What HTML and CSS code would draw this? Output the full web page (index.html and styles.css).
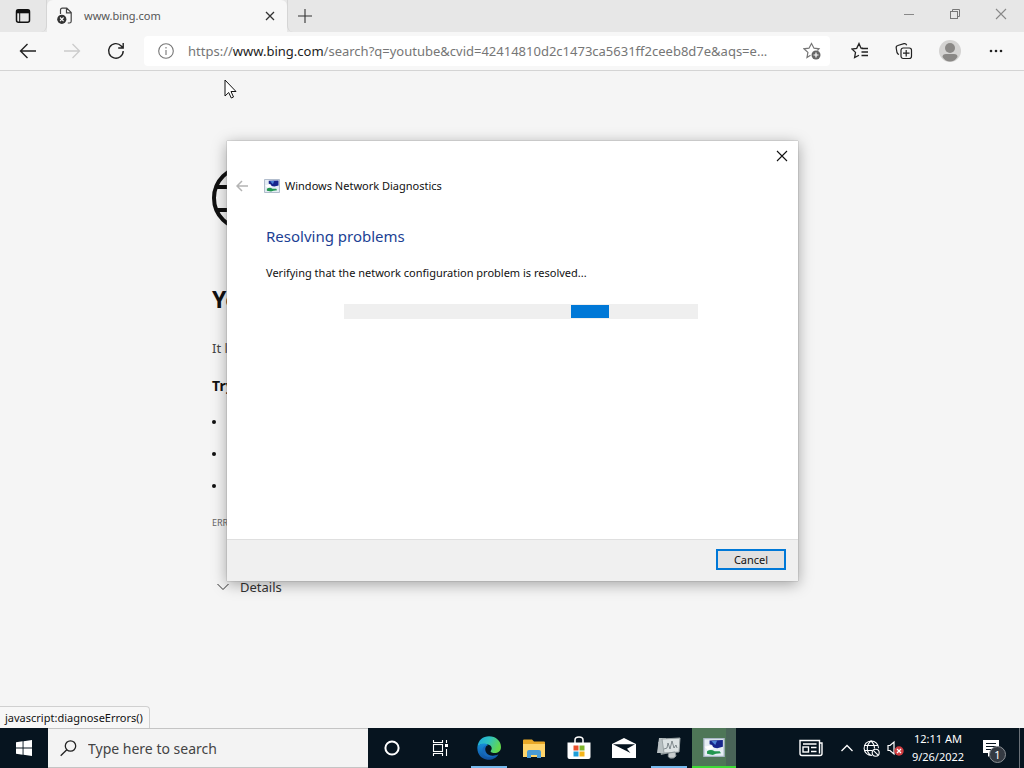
FILE: index.html
```html
<!DOCTYPE html>
<html lang="en">
<head>
<meta charset="utf-8">
<title>www.bing.com</title>
<link rel="stylesheet" href="styles.css">
</head>
<body>
<header class="browser">
  <div class="tabstrip">
    <button class="tab-actions" aria-label="Tab actions">
      <svg width="16" height="16" viewBox="0 0 16 16" fill="none" stroke="#111" stroke-width="1.5"><rect x="1.5" y="1.7" width="13" height="12.6" rx="2"/><path d="M1.5 3.5h13" stroke-width="3.6"/><path d="M4.7 5v9" stroke-width="1"/></svg>
    </button>
    <div class="tab">
      <svg width="16" height="18" viewBox="0 0 16 18" fill="none" stroke="#444" stroke-width="1.2"><path d="M3.5 7V3q0-1.8 1.8-1.8h4.5l4.4 4.4v8.6q0 1.8-1.8 1.8h-1.6M9.5 1.5v4.3h4.4"/><circle cx="4.8" cy="12.3" r="4.6" fill="#333" stroke="none"/><path d="M3 10.5l3.6 3.6M6.6 10.5L3 14.1" stroke="#fff" stroke-width="1.1"/></svg>
      <span class="tab-title">www.bing.com</span>
      <button class="tab-close" aria-label="Close tab">
        <svg width="10" height="10" viewBox="0 0 10 10" stroke="#333" stroke-width="1.3"><path d="M1 1l8 8M9 1L1 9"/></svg>
      </button>
    </div>
    <button class="new-tab" aria-label="New tab">
      <svg width="14" height="14" viewBox="0 0 14 14" stroke="#333" stroke-width="1.1"><path d="M7 0v14M0 7h14"/></svg>
    </button>
    <div class="window-buttons">
      <button aria-label="Minimize"><svg width="12" height="12" viewBox="0 0 12 12" stroke="#888"><path d="M1 6.5h10"/></svg></button>
      <button aria-label="Restore"><svg width="12" height="12" viewBox="0 0 12 12" fill="none" stroke="#777"><rect x="1.5" y="3.5" width="7" height="7"/><path d="M3.500 3.500v-2h7v7h-2"/></svg></button>
      <button aria-label="Close"><svg width="12" height="12" viewBox="0 0 12 12" stroke="#888" stroke-width="1.1"><path d="M1 1l10 10M11 1L1 11"/></svg></button>
    </div>
  </div>
  <div class="toolbar">
    <button class="tool" aria-label="Back"><svg width="18" height="16" viewBox="0 0 18 16" fill="none" stroke="#222" stroke-width="1.4"><path d="M17 8H1.500M8.500 1L1.500 8l7 7"/></svg></button>
    <button class="tool" aria-label="Forward" disabled><svg width="18" height="16" viewBox="0 0 18 16" fill="none" stroke="#ccc" stroke-width="1.3"><path d="M1 8h15.500M9.500 1l7 7-7 7"/></svg></button>
    <button class="tool" aria-label="Refresh"><svg width="18" height="18" viewBox="0 0 18 18" fill="none" stroke="#222" stroke-width="1.4"><path d="M16.200 9a7.300 7.300 0 1 1-2-5.100l2 2.100M16.200 1v5h-5"/></svg></button>
    <div class="address">
      <svg width="16" height="16" viewBox="0 0 16 16" fill="none" stroke="#767676" stroke-width="1.1"><circle cx="8" cy="8" r="7.300"/><path d="M8 7v5M8 4v1.500"/></svg>
      <span class="url">https://<b>www.bing.com</b>/search?q=youtube&amp;cvid=42414810d2c1473ca5631ff2ceeb8d7e&amp;aqs=e...</span>
      <button class="add-favorite" aria-label="Add this page to favorites"><svg width="18" height="18" viewBox="0 0 18 18" fill="none" stroke="#767676" stroke-width="1.200"><path d="M7.500 13.200L4 15.500l.9-5.100L1 6.800l5-.6L8.500 1.500 11 6.200l5 .6-1.500 1.700"/><circle cx="13" cy="13" r="4.500" fill="#666" stroke="none"/><path d="M13 10.500v5M10.500 13h5" stroke="#fff"/></svg></button>
    </div>
    <button class="tool" aria-label="Favorites"><svg width="18" height="18" viewBox="0 0 18 18" fill="none" stroke="#222" stroke-width="1.300"><path d="M12 6.200h-2L8 1.500 5.700 6.300 1 7l3.500 3.400-.9 5.200L8 13.200M10.500 6.500H17M10.500 10H17M10.500 13.500H17"/></svg></button>
    <button class="tool" aria-label="Collections"><svg width="18" height="18" viewBox="0 0 18 18" fill="none" stroke="#222" stroke-width="1.200"><path d="M4 12.500Q2.400 12 2 10.500L1.200 6q-.3-2 1.600-2.500L9 1.700q2-.4 2.700 1.500"/><rect x="6" y="6" width="10.500" height="10.500" rx="2.200"/><path d="M11.200 8v6.500M8 11.200h6.500"/></svg></button>
    <button class="tool" aria-label="Profile"><svg width="22" height="22" viewBox="0 0 22 22"><circle cx="11" cy="11" r="11" fill="#d4d3d2"/><circle cx="11" cy="8" r="5" fill="#8a8886"/><path d="M3.500 17q0-3 3.500-3h8q3.500 0 3.500 3-3 4.500-7.500 4.500T3.500 17" fill="#8a8886"/></svg></button>
    <button class="tool" aria-label="Settings and more"><svg width="14" height="4" viewBox="0 0 14 4" fill="#222"><circle cx="2" cy="2" r="1.300"/><circle cx="7" cy="2" r="1.300"/><circle cx="12" cy="2" r="1.300"/></svg></button>
  </div>
</header>

<main class="page">
  <article class="offline">
    <svg class="globe" width="66" height="66" viewBox="0 0 66 66" fill="none" stroke="#111" stroke-width="4"><circle cx="33" cy="33" r="31"/><ellipse cx="33" cy="33" rx="14" ry="31"/><path d="M5 22h56M5 45h56"/></svg>
    <h1>You’re not connected</h1>
    <p class="lead">It looks like you’re offline</p>
    <h2>Try:</h2>
    <ul>
      <li>Checking the network cables</li>
      <li>Reconnecting to Wi-Fi</li>
      <li>Running Diagnostics</li>
    </ul>
    <p class="code">ERR_INTERNET_DISCONNECTED</p>
    <button class="details"><svg width="12" height="8" viewBox="0 0 12 8" fill="none" stroke="#333"><path d="M.5 1L6 6.500 11.500 1"/></svg>Details</button>
  </article>
  <section class="dialog" role="dialog" aria-labelledby="dialog-title">
    <button class="dialog-close" aria-label="Close"><svg width="12" height="12" viewBox="0 0 12 12" stroke="#111" stroke-width="1.100"><path d="M1 1l10 10M11 1L1 11"/></svg></button>
    <div class="dialog-head">
      <button class="dialog-back" aria-label="Back" disabled><svg width="12" height="12" viewBox="0 0 12 12" fill="none" stroke="#b4b4b4" stroke-width="1.500"><path d="M12 6H1M6 1L1 6l5 5"/></svg></button>
      <svg width="16" height="14" viewBox="0 0 34 30"><use href="#diag"/></svg>
      <span id="dialog-title">Windows Network Diagnostics</span>
    </div>
    <div class="dialog-body">
      <h3>Resolving problems</h3>
      <p>Verifying that the network configuration problem is resolved...</p>
      <div class="progress" role="progressbar" aria-label="Resolving problems"><div class="chunk"></div></div>
    </div>
    <footer class="dialog-foot"><button class="cancel">Cancel</button></footer>
  </section>
  <div class="status">javascript:diagnoseErrors()</div>
  <svg class="cursor" width="13" height="20" viewBox="0 0 13 20" fill="#fff" stroke="#111"><path d="M1 1v16l3.700-3.500 2.600 5.500 2.200-1-2.500-5.500H12z"/></svg>
</main>

<nav class="taskbar">
  <button class="start" aria-label="Start"><svg width="16" height="16" viewBox="0 0 16 16" fill="#fff"><path d="M0 2.200L6.600 1.300v6.200H0zM7.500 1.200L16 0v7.500H7.500zM0 8.400h6.600v6.300L0 13.800zM7.500 8.400H16V16l-8.500-1.200z"/></svg></button>
  <label class="search">
    <svg width="17" height="17" viewBox="0 0 17 17" fill="none" stroke="#222" stroke-width="1.300"><circle cx="10.500" cy="6" r="5.200"/><path d="M6.800 9.700L.7 15.800"/></svg>
    <input type="text" placeholder="Type here to search" aria-label="Search">
  </label>
  <button class="sys" aria-label="Cortana"><svg width="16" height="16" viewBox="0 0 16 16" fill="none" stroke="#fff" stroke-width="2"><circle cx="8" cy="8" r="6.600"/></svg></button>
  <button class="sys" aria-label="Task View"><svg width="16" height="16" viewBox="0 0 16 16" fill="none" stroke="#fff" stroke-width="1.100"><rect x="1.500" y="4.500" width="9" height="7"/><path d="M1.500 0v2.500h9V0M1.500 16v-2.500h9V16M14.500 0v3M14.500 9v7"/><path d="M13 4h3v3h-3z" fill="#fff" stroke="none"/></svg></button>
  <div class="apps">
    <button class="app open" aria-label="Microsoft Edge"><svg width="24" height="24" viewBox="0 0 24 24"><defs><linearGradient id="eg" x1="0" y1="0" x2="1" y2=".4"><stop offset="0" stop-color="#1ba6e0"/><stop offset=".5" stop-color="#2fc2c0"/><stop offset="1" stop-color="#62d84e"/></linearGradient><linearGradient id="eb" x1="0" y1="0" x2="0" y2="1"><stop offset="0" stop-color="#168ed8"/><stop offset="1" stop-color="#104fa0"/></linearGradient></defs><path d="M.5 11C1 4 6 .2 12 .2 19 .2 24 5 24 11c0 4-3 6-6.500 6-3 0-4.500-1-3.500-2.500 1.500-2 .8-5-3-6C6.500 7.500 2 8.500.5 11" fill="url(#eg)"/><path d="M.4 11C2 7.500 8 6.500 11 9c-3 1-4 4-3 7 1.500 4.500 7 5.500 13.500 2.500-3 4.500-7.500 5.600-11 5.200C4.500 23-.2 18 .4 11" fill="url(#eb)"/><path d="M11 9c-3 1-3.500 5-1.500 8 2.500 3.300 7 3.500 11.800 1.500-6.500 4-13.500 3.500-15.500-2C4.500 12.500 7 9 11 9" fill="#1769bd"/></svg></button>
    <button class="app" aria-label="File Explorer"><svg width="22" height="19" viewBox="0 0 22 19"><path d="M0 1.500Q0 .5 1 .5h8l2 2h10q1 0 1 1V17H0z" fill="#e9a928"/><path d="M0 5h22v13H0z" fill="#ffd56b"/><path d="M4 19v-6q0-2 2-2h10q2 0 2 2v6h-4v-3H8v3z" fill="#4a9bd5"/></svg></button>
    <button class="app" aria-label="Microsoft Store"><svg width="24" height="24" viewBox="0 0 24 24"><path d="M8 7V4q0-3 4-3t4 3v3" fill="none" stroke="#fff" stroke-width="1.500"/><path d="M.5 6.500h23V21q0 2-2 2h-19q-2 0-2-2z" fill="#fff"/><path d="M6.500 9.500h5v5h-5z" fill="#e8502d"/><path d="M12.500 9.500h5v5h-5z" fill="#7fb52b"/><path d="M6.500 15.500h5v5h-5z" fill="#209fd8"/><path d="M12.500 15.500h5v5h-5z" fill="#f5b51b"/></svg></button>
    <button class="app" aria-label="Mail"><svg width="24" height="20" viewBox="0 0 24 20"><path d="M0 6L12 0l12 6v14H0z" fill="#fff"/><path d="M1 6.200h22l-8 4.600 3.500 4.200z" fill="#06141f"/></svg></button>
    <button class="app open" aria-label="Resource Monitor"><svg width="24" height="22" viewBox="0 0 24 22"><path d="M1 5l14-3 2 13-13 3z" fill="#8c9699"/><path d="M2 1h7l-1 15H0z" fill="#b8c0c2"/><path d="M5 2l18-1-1 14-15 1z" fill="#dce2e3" stroke="#9aa3a5"/><path d="M7 12l3-1 1-5 2 6 2-8 2 7 2-3 1 3" fill="none" stroke="#697479" stroke-width=".8"/><path d="M12 16l6-1 1 4q-2 3-6 2-3-1-1-5" fill="#c8cdce" stroke="#8c9699"/></svg></button>
    <button class="app active" aria-label="Windows Network Diagnostics"><svg width="22" height="19" viewBox="0 0 34 30"><g id="diag"><path d="M1 1h32v28H1z" fill="#e6eef5" stroke="#a9b6c6" stroke-width="2"/><path d="M10 4l21-1v11l-9 2-6-1-2-4-4-1z" fill="#17258c"/><path d="M13 5l9-1-3 7z" fill="#4d83d5"/><path d="M6 21q6-4 12 0h8l2 3-8 1-5 2-9-2z" fill="#229650"/><path d="M2 14l9-2 7 4-11 3z" fill="#fff"/></g></svg></button>
  </div>
  <div class="tray">
    <button class="news" aria-label="News and interests"><svg width="24" height="18" viewBox="0 0 24 18" fill="none" stroke="#fff" stroke-width="1.400"><path d="M20.500 4V1.500H1v13q0 2 2 2h18q2 0 2-2V4h-2.500v10.500"/><rect x="4" y="8" width="5.500" height="5"/><path d="M4 5h13.500M12 8.500h5.500M12 12.500h5.500"/></svg></button>
    <button class="tray-item" aria-label="Show hidden icons"><svg width="12" height="8" viewBox="0 0 12 8" fill="none" stroke="#fff" stroke-width="1.300"><path d="M.5 7L6 1.500 11.500 7"/></svg></button>
    <button class="tray-item" aria-label="No internet access"><svg width="17" height="17" viewBox="0 0 17 17" fill="none" stroke="#fff" stroke-width="1.100"><path d="M9 15.300a7.200 7.200 0 1 1 6.500-7M1 5.500h14M1 10.500h8M8 1C3 5 3 12 8 15.500M8 1q3.500 3 3.500 7.500"/><circle cx="12.700" cy="12.700" r="3.500"/><path d="M10.300 10.300l4.800 4.800"/></svg></button>
    <button class="tray-item" aria-label="Muted"><svg width="17" height="16" viewBox="0 0 17 16"><path d="M1 5.500h2L7 2v12l-4-3.500H1z" fill="none" stroke="#fff" stroke-width="1.200"/><circle cx="12" cy="11" r="4.700" fill="#d03c40"/><path d="M10 9l4 4M14 9l-4 4" stroke="#fff" stroke-width="1.200"/></svg></button>
    <button class="clock"><span>12:11 AM</span><span>9/26/2022</span></button>
    <button class="notices" aria-label="Notifications"><svg width="16" height="17" viewBox="0 0 16 17"><path d="M0 0h16v13H9l-4 4v-4H0z" fill="#fff"/><path d="M3 3.500h10M3 6.500h10M3 9.500h10" stroke="#06141f"/></svg><span class="badge">1</span></button>
    <button class="show-desktop" aria-label="Show desktop"></button>
  </div>
</nav>
</body>
</html>
```

FILE: styles.css
```css
* { box-sizing: border-box; }
body {
  margin: 0;
  height: 100vh;
  display: flex;
  flex-direction: column;
  overflow: hidden;
  font-family: "Noto Sans", "Open Sans", sans-serif;
  color: #111;
  background: #f5f5f5;
}
button {
  display: flex;
  align-items: center;
  justify-content: center;
  padding: 0;
  border: 0;
  background: none;
  color: inherit;
  font: inherit;
}
svg { display: block; flex: none; }
h1, h2, h3, p, ul { margin: 0; }

/* Browser frame */
.tabstrip { display: flex; height: 32px; background: #e7e7e7; }
.tab-actions { width: 47px; border-right: 1px solid #d5d5d5; border-radius: 0 0 6px 0; }
.tab {
  display: flex;
  align-items: center;
  width: 240px;
  padding: 0 10px;
  gap: 11px;
  background: #f7f7f7;
  border-radius: 6px 6px 0 0;
}
.tab-title { flex: 1; font-size: 11px; line-height: 16px; color: #555; }
.tab-close { width: 14px; height: 16px; }
.new-tab { width: 34px; border-left: 1px solid #d5d5d5; border-radius: 0 0 0 6px; }
.window-buttons { display: flex; margin-left: auto; padding-bottom: 4px; }
.window-buttons button { width: 46px; }
.toolbar {
  display: flex;
  align-items: center;
  height: 39px;
  padding: 0 6px;
  background: #f7f7f7;
  border-bottom: 1px solid #d4d4d4;
}
.tool { width: 44px; height: 32px; }
.tool:nth-last-child(2) { width: 48px; }
.address {
  display: flex;
  align-items: center;
  flex: 1;
  min-width: 0;
  height: 30px;
  margin: 0 8px 0 6px;
  padding: 0 9px 0 14px;
  gap: 14px;
  background: #fff;
  border-radius: 4px;
}
.url {
  flex: 1;
  min-width: 0;
  overflow: hidden;
  white-space: nowrap;
  font-size: 13px;
  line-height: 20px;
  color: #767676;
}
.url b { font-weight: 400; color: #222; }

/* Page behind the dialog */
.page { position: relative; flex: 1; min-height: 0; background: #f5f5f5; }
.offline { width: 600px; margin: 0 auto; padding-top: 94px; }
.offline h1 { margin-top: 52px; font-size: 23px; line-height: 32px; }
.lead { margin-top: 21px; font-size: 13px; line-height: 24px; color: #444; }
.offline h2 { margin-top: 16px; font-size: 14px; line-height: 20px; }
.offline ul { margin-top: 15px; padding-left: 14px; }
.offline li { margin-bottom: 12px; padding-left: 4px; font-size: 10px; line-height: 20px; }
.code { margin-top: 20px; font-size: 9px; line-height: 16px; color: #666; }
.details { margin-top: 46px; padding-left: 5px; gap: 11px; font-size: 13px; line-height: 20px; color: #333; }
.cursor { position: absolute; left: 224px; top: 8px; }
.status {
  position: absolute;
  left: 0;
  bottom: 0;
  padding: 2px 6px 2px 5px;
  border: 1px solid #d0d0d0;
  border-width: 1px 1px 0 0;
  border-radius: 0 4px 0 0;
  background: #f7f7f7;
  font-size: 11px;
  line-height: 17px;
}

/* Troubleshooter dialog */
.dialog {
  position: absolute;
  left: 227px;
  top: 70px;
  width: 571px;
  height: 440px;
  display: flex;
  flex-direction: column;
  background: #fff;
  box-shadow: 0 0 1px #777, 0 3px 14px rgba(0, 0, 0, .35);
  font-size: 11px;
  line-height: 16px;
}
.dialog-close { align-self: flex-end; width: 32px; height: 30px; }
.dialog-head { display: flex; align-items: center; height: 30px; padding-left: 9px; }
.dialog-back { margin-right: 16px; }
#dialog-title { margin-left: 5px; }
.dialog-body { flex: 1; padding: 23px 100px 0 39px; }
.dialog-body h3 { font-size: 15px; font-weight: 400; line-height: 24px; color: #1c3f94; }
.dialog-body p { margin-top: 17px; white-space: nowrap; }
.progress { margin: 23px 0 0 78px; height: 15px; padding: 1px 0; background: #efefef; }
.chunk { width: 11%; height: 13px; margin-left: 64%; background: #0078d7; }
.dialog-foot {
  display: flex;
  align-items: center;
  justify-content: flex-end;
  height: 42px;
  padding: 0 12px 2px 0;
  border-top: 1px solid #dfdfdf;
  background: #f0f0f0;
}
.cancel { width: 70px; height: 21px; border: 2px solid #0078d7; background: #e1e1e1; }

/* Taskbar */
.taskbar { display: flex; height: 40px; background: #06141f; color: #fff; }
.start, .sys { width: 48px; }
.search {
  display: flex;
  align-items: center;
  width: 320px;
  padding-left: 12px;
  gap: 11px;
  background: #f3f3f3;
  border: 1px solid #c4c4c4;
  border-width: 1px 0;
}
.search input { flex: 1; min-width: 0; padding: 1px 0 0; border: 0; outline: 0; background: none; font: 14px/20px "Noto Sans", "Open Sans", sans-serif; color: #333; }
.search input::placeholder { color: #444; opacity: 1; }
.apps { display: flex; padding-left: 3px; gap: 1px; }
.app { position: relative; width: 44px; }
.app.open::after { content: ""; position: absolute; left: 4px; right: 4px; bottom: 0; height: 2px; background: #76b9ed; }
.app.active { background: linear-gradient(90deg, #4e7657 78%, #496458 78%); border-bottom: 2px solid #3edb36; }
.tray { display: flex; margin-left: auto; }
.news { width: 48px; }
.tray-item { width: 24px; }
.clock { flex-direction: column; width: 62px; font-size: 11px; line-height: 18px; }
.notices { position: relative; width: 50px; padding-right: 6px; }
.badge {
  position: absolute;
  left: 20px;
  top: 18px;
  width: 17px;
  height: 17px;
  border: 1px solid #8a8f94;
  border-radius: 50%;
  background: #343a42;
  font-size: 11px;
  line-height: 15px;
}
.show-desktop { width: 5px; border-left: 1px solid #6a7178; }
```
